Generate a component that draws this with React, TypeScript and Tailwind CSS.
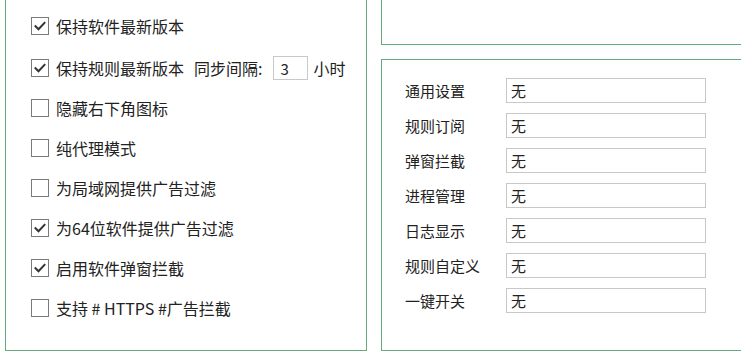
import React from "react";

const options = [
  { label: "保持软件最新版本", checked: true },
  { label: "保持规则最新版本", checked: true, interval: "3" },
  { label: "隐藏右下角图标", checked: false },
  { label: "纯代理模式", checked: false },
  { label: "为局域网提供广告过滤", checked: false },
  { label: "为64位软件提供广告过滤", checked: true },
  { label: "启用软件弹窗拦截", checked: true },
  { label: "支持 # HTTPS #广告拦截", checked: false },
];

const hotkeys = ["通用设置", "规则订阅", "弹窗拦截", "进程管理", "日志显示", "规则自定义", "一键开关"];

function CheckBox({ checked }: { checked: boolean }) {
  return (
    <span className="flex h-[18px] w-[18px] shrink-0 items-center justify-center border border-[#7a7a7a] bg-white">
      {checked && (
        <svg width="14" height="14" viewBox="0 0 14 14" fill="none" stroke="#333" strokeWidth="2" strokeLinecap="square">
          <path d="M2.5 7.2l3 3 6-6.4" />
        </svg>
      )}
    </span>
  );
}

export default function App() {
  return (
    <div
      className="flex h-[354px] w-[741px] gap-[14px] overflow-hidden bg-white pl-[5px] text-[#222]"
      style={{ fontFamily: '"Noto Sans CJK SC", "Noto Sans", sans-serif' }}
    >
      {/* general options */}
      <div className="mt-[-20px] h-[371px] w-[362px] shrink-0 border border-[#66aa7e] pl-[25px] pt-[25px] text-[16px]">
        {options.map((opt, i) => (
          <div key={opt.label} className={`flex h-[40px] items-center ${i === 1 ? "mt-[2px]" : ""}`}>
            <CheckBox checked={opt.checked} />
            <span className="ml-[7px] whitespace-nowrap leading-none">{opt.label}</span>
            {opt.interval && (
              <>
                <span className="ml-[10px] whitespace-nowrap leading-none">同步间隔:</span>
                <span className="ml-[11px] flex h-[24px] w-[35px] items-center border border-[#c9c9c9] pl-[6px] text-[15px] leading-none">
                  {opt.interval}
                </span>
                <span className="ml-[5px] whitespace-nowrap leading-none">小时</span>
              </>
            )}
          </div>
        ))}
      </div>

      {/* right column */}
      <div className="mt-[-20px] flex w-[380px] shrink-0 flex-col gap-[14px]">
        <div className="h-[65px] border border-[#66aa7e]" />
        <div className="flex h-[292px] flex-col gap-[10px] border border-[#66aa7e] pl-[23px] pt-[18px] text-[15px]">
          {hotkeys.map((name) => (
            <div key={name} className="flex h-[25px] items-center">
              <span className="w-[101px] whitespace-nowrap leading-none">{name}</span>
              <span className="flex h-[25px] w-[200px] items-center border border-[#c8c8c8] pl-[4px] leading-none">无</span>
            </div>
          ))}
        </div>
      </div>
    </div>
  );
}
